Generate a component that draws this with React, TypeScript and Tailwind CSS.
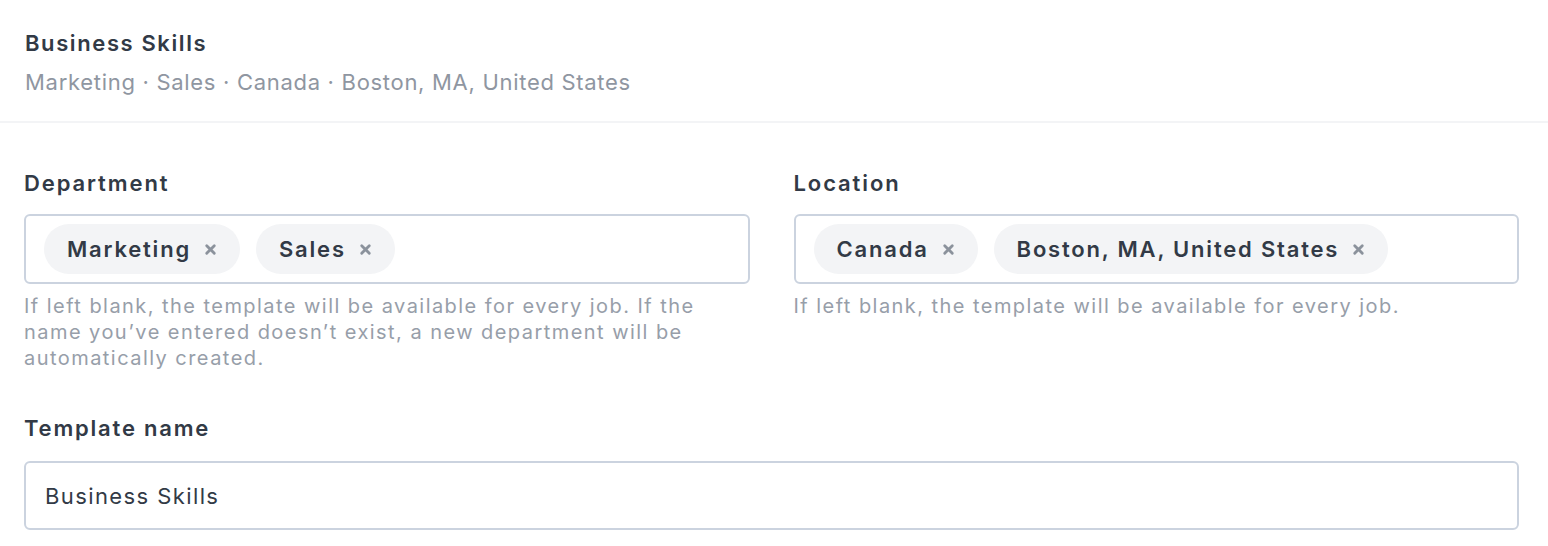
import React from "react";

function XIcon() {
  return (
    <svg width="13" height="13" viewBox="0 0 12 12" className="shrink-0 text-[#8b929c]">
      <path d="M2.5 2.5l7 7M9.5 2.5l-7 7" stroke="currentColor" strokeWidth="2.6" strokeLinecap="round" />
    </svg>
  );
}

function Chip({ label }: { label: string }) {
  return (
    <span className="inline-flex h-[50px] items-center gap-[13px] rounded-full bg-[#f3f4f6] px-[23px] text-[22px] font-semibold tracking-[1.8px] text-[#323a46]">
      {label}
      <XIcon />
    </span>
  );
}

function TagField({ label, tags, help }: { label: string; tags: string[]; help: string }) {
  return (
    <div className="flex flex-col">
      <label className="text-[22px] font-semibold leading-[28px] tracking-[1.9px] text-[#323a46]">{label}</label>
      <div className="mt-[17px] flex h-[70px] items-center gap-4 rounded-md border-2 border-[#cbd3df] px-[18px]">
        {tags.map((t) => (
          <Chip key={t} label={t} />
        ))}
      </div>
      <p className="mt-[9px] text-[20px] leading-[26px] tracking-[1.45px] text-[#979ea9]">{help}</p>
    </div>
  );
}

export default function App() {
  return (
    <div className="min-h-screen bg-white font-['Inter','Noto_Sans',sans-serif]">
      <div className="border-b-2 border-[#f3f4f6] px-[25px] pb-[25px] pt-[29px]">
        <h1 className="text-[22px] font-semibold leading-[28px] tracking-[1.6px] text-[#323a46]">Business Skills</h1>
        <p className="mt-[11px] text-[22px] leading-[28px] tracking-[0.7px] text-[#8f96a1]">
          Marketing · Sales · Canada · Boston, MA, United States
        </p>
      </div>
      <div className="pl-[24px] pr-[29px] pt-[46px]">
        <div className="grid grid-cols-2 gap-[44px]">
          <TagField
            label="Department"
            tags={["Marketing", "Sales"]}
            help="If left blank, the template will be available for every job. If the name you’ve entered doesn’t exist, a new department will be automatically created."
          />
          <TagField
            label="Location"
            tags={["Canada", "Boston, MA, United States"]}
            help="If left blank, the template will be available for every job."
          />
        </div>
        <div className="mt-[43px] flex flex-col">
          <label className="text-[22px] font-semibold leading-[28px] tracking-[1.8px] text-[#323a46]">Template name</label>
          <input
            defaultValue="Business Skills"
            className="mt-[19px] h-[69px] rounded-md border-2 border-[#cbd3df] px-[19px] text-[22px] tracking-[1.4px] text-[#323a46] outline-none"
          />
        </div>
      </div>
    </div>
  );
}
